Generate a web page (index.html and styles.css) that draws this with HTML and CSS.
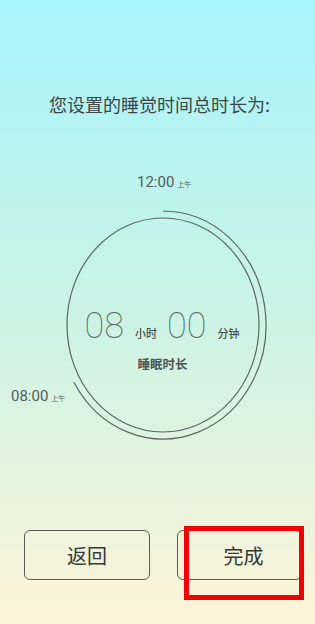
FILE: index.html
```html
<!DOCTYPE html>
<html>
  <head>
    <meta charset="UTF-8" />
    <title>睡眠时长</title>
    <link rel="stylesheet" href="styles.css">
  </head>
  <body>
    <div class="screen">
      <h1 class="title">您设置的睡觉时间总时长为:</h1>

      <div class="dial">
        <svg class="dial-lines" width="315" height="280" viewBox="0 0 315 280">
          <ellipse cx="163" cy="157" rx="96" ry="107" />
          <path d="M163 43 A103 114 0 1 1 73.8 214" />
        </svg>
        <div class="clock clock-start">12:00<small>上午</small></div>
        <div class="clock clock-end">08:00<small>上午</small></div>
        <div class="dial-center">
          <div class="duration">
            <span class="num">08</span><span class="unit">小时</span>
            <span class="num">00</span><span class="unit">分钟</span>
          </div>
          <div class="caption">睡眠时长</div>
        </div>
      </div>

      <div class="actions">
        <button class="btn btn-back">返回</button>
        <button class="btn btn-done">完成</button>
      </div>
      <div class="highlight"></div>
    </div>
  </body>
</html>
```

FILE: styles.css
```css
* {
   box-sizing: border-box;
}
body {
   margin: 0;
   font-family: "Noto Sans CJK SC", "Noto Sans", sans-serif;
   color: #4a4f4f;
}
.screen {
   position: relative;
   width: 315px;
   height: 624px;
   overflow: hidden;
   display: flex;
   flex-direction: column;
   background: linear-gradient(180deg, #a7f4fb 0%, #c9f3e6 48%, #fdf4d8 100%);
}
.title {
   margin: 91px 0 0 0;
   padding-left: 4px;
   font-size: 18px;
   line-height: 26px;
   font-weight: 400;
   text-align: center;
   color: #3f4646;
}

/* dial */
.dial {
   position: relative;
   height: 280px;
   margin-top: 51px;
}
.dial-lines {
   display: block;
}
.dial-lines ellipse,
.dial-lines path {
   fill: none;
   stroke: #5c6663;
   stroke-width: 1.2;
}
.clock {
   position: absolute;
   font-family: Roboto, "Noto Sans", sans-serif;
   font-size: 15px;
   line-height: 18px;
   color: #555b5a;
   white-space: nowrap;
}
.clock small {
   font-family: "Noto Sans CJK SC", sans-serif;
   font-size: 7px;
   margin-left: 3px;
}
.clock-start {
   left: 137px;
   top: 5px;
}
.clock-end {
   left: 11px;
   top: 219px;
}
.dial-center {
   position: absolute;
   left: 67px;
   top: 50px;
   width: 192px;
   height: 214px;
   display: flex;
   flex-direction: column;
   align-items: center;
   justify-content: center;
   padding-top: 28px;
}
.duration {
   display: flex;
   align-items: baseline;
   margin-left: -2px;
}
.num {
   font-family: Roboto, sans-serif;
   font-weight: 100;
   font-size: 36px;
   line-height: 40px;
   color: #5b6663;
}
.unit {
   font-size: 11px;
   font-weight: 500;
   margin: 0 10px 0 11px;
   color: #4a4f4f;
}
.unit:last-child {
   margin-right: 0;
}
.caption {
   margin-top: 9px;
   margin-left: -1px;
   font-size: 12.5px;
   font-weight: 700;
   line-height: 18px;
   color: #4f5554;
}

/* buttons */
.actions {
   display: flex;
   gap: 27px;
   padding-left: 24px;
   margin-top: 82px;
}
.btn {
   width: 126px;
   height: 50px;
   border: 1.2px solid #5a5a50;
   border-radius: 6px;
   background: transparent;
   font-family: "Noto Sans CJK SC", sans-serif;
   font-size: 20px;
   color: #383838;
   padding: 0;
}
.btn-done {
   width: 125px;
   padding-left: 8px;
}
.highlight {
   position: absolute;
   left: 184px;
   top: 526px;
   width: 120px;
   height: 74px;
   border: 5px solid #f50000;
}
```
